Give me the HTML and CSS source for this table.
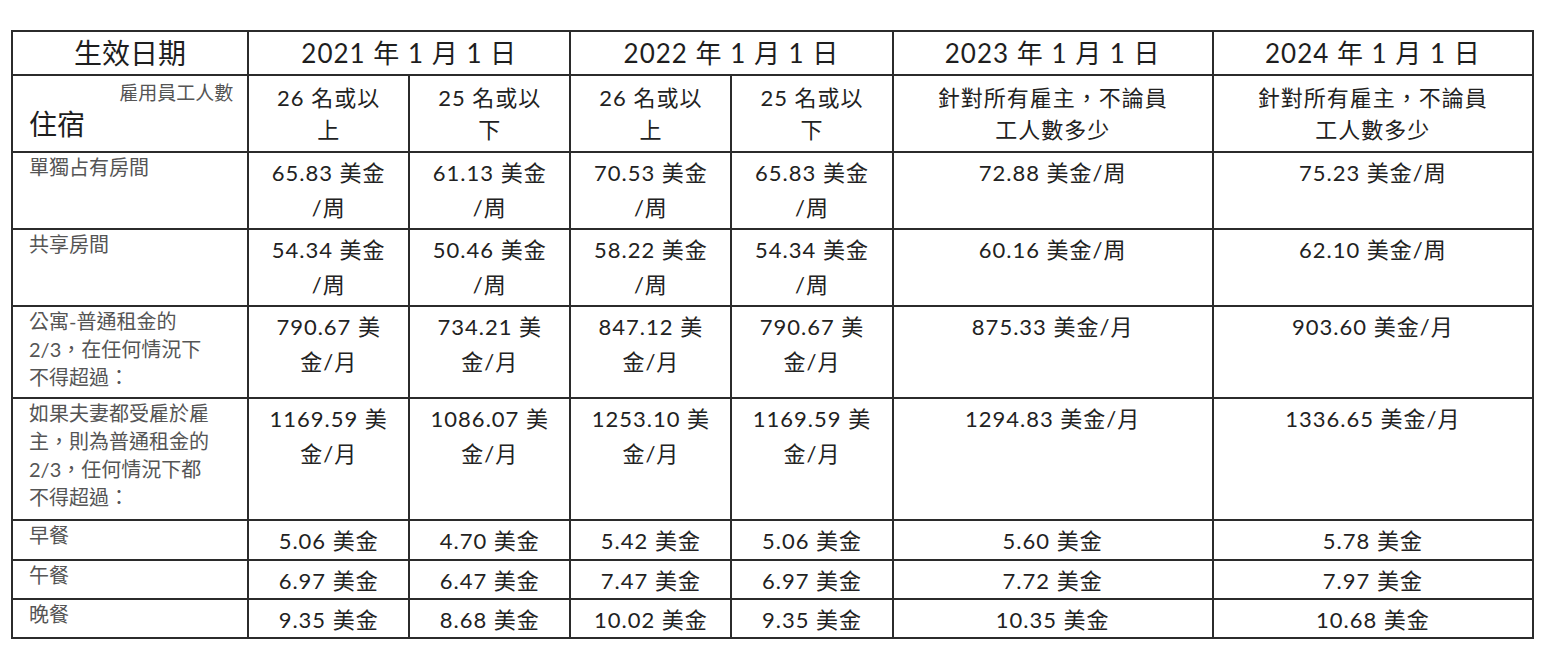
FILE: index.html
```html
<!DOCTYPE html>
<html lang="zh-Hant">
<head>
<meta charset="utf-8">
<title>住宿與餐費</title>
<link rel="stylesheet" href="styles.css">
</head>
<body>
<table class="rates">
  <colgroup>
    <col class="c-label">
    <col class="c-narrow"><col class="c-narrow"><col class="c-narrow"><col class="c-narrow">
    <col class="c-wide"><col class="c-wide">
  </colgroup>
  <tr class="r-head">
    <th class="h-main">生效日期</th>
    <th colspan="2">2021 年 1 月 1 日</th>
    <th colspan="2">2022 年 1 月 1 日</th>
    <th>2023 年 1 月 1 日</th>
    <th>2024 年 1 月 1 日</th>
  </tr>
  <tr class="r-sub">
    <td class="corner"><div class="corner-top">雇用員工人數</div><div class="corner-main">住宿</div></td>
    <td class="sub">26 名或以<br>上</td>
    <td class="sub">25 名或以<br>下</td>
    <td class="sub">26 名或以<br>上</td>
    <td class="sub">25 名或以<br>下</td>
    <td class="sub">針對所有雇主，不論員<br>工人數多少</td>
    <td class="sub">針對所有雇主，不論員<br>工人數多少</td>
  </tr>
  <tr class="r-77">
    <td class="label">單獨占有房間</td>
    <td class="val">65.83 美金<br>/周</td>
    <td class="val">61.13 美金<br>/周</td>
    <td class="val">70.53 美金<br>/周</td>
    <td class="val">65.83 美金<br>/周</td>
    <td class="val">72.88 美金/周</td>
    <td class="val">75.23 美金/周</td>
  </tr>
  <tr class="r-77">
    <td class="label">共享房間</td>
    <td class="val">54.34 美金<br>/周</td>
    <td class="val">50.46 美金<br>/周</td>
    <td class="val">58.22 美金<br>/周</td>
    <td class="val">54.34 美金<br>/周</td>
    <td class="val">60.16 美金/周</td>
    <td class="val">62.10 美金/周</td>
  </tr>
  <tr class="r-92">
    <td class="label">公寓-普通租金的<br>2/3，在任何情況下<br>不得超過：</td>
    <td class="val">790.67 美<br>金/月</td>
    <td class="val">734.21 美<br>金/月</td>
    <td class="val">847.12 美<br>金/月</td>
    <td class="val">790.67 美<br>金/月</td>
    <td class="val">875.33 美金/月</td>
    <td class="val">903.60 美金/月</td>
  </tr>
  <tr class="r-122">
    <td class="label">如果夫妻都受雇於雇<br>主，則為普通租金的<br>2/3，任何情況下都<br>不得超過：</td>
    <td class="val">1169.59 美<br>金/月</td>
    <td class="val">1086.07 美<br>金/月</td>
    <td class="val">1253.10 美<br>金/月</td>
    <td class="val">1169.59 美<br>金/月</td>
    <td class="val">1294.83 美金/月</td>
    <td class="val">1336.65 美金/月</td>
  </tr>
  <tr class="r-40">
    <td class="label">早餐</td>
    <td class="val">5.06 美金</td>
    <td class="val">4.70 美金</td>
    <td class="val">5.42 美金</td>
    <td class="val">5.06 美金</td>
    <td class="val">5.60 美金</td>
    <td class="val">5.78 美金</td>
  </tr>
  <tr class="r-39">
    <td class="label">午餐</td>
    <td class="val">6.97 美金</td>
    <td class="val">6.47 美金</td>
    <td class="val">7.47 美金</td>
    <td class="val">6.97 美金</td>
    <td class="val">7.72 美金</td>
    <td class="val">7.97 美金</td>
  </tr>
  <tr class="r-38">
    <td class="label">晚餐</td>
    <td class="val">9.35 美金</td>
    <td class="val">8.68 美金</td>
    <td class="val">10.02 美金</td>
    <td class="val">9.35 美金</td>
    <td class="val">10.35 美金</td>
    <td class="val">10.68 美金</td>
  </tr>
</table>
</body>
</html>
```

FILE: styles.css
```css
html, body {
  margin: 0;
  padding: 0;
  background: #ffffff;
}

body {
  font-family: Lato, "Noto Sans CJK TC", sans-serif;
  color: #222222;
}

.rates {
  margin: 30px 0 0 11px;
  border-collapse: collapse;
  table-layout: fixed;
  width: 1523px;
}

.c-label { width: 236px; }
.c-narrow { width: 161px; }
.c-wide { width: 320px; }

.rates th,
.rates td {
  border: 2px solid #2b2b2b;
  padding: 0;
  vertical-align: top;
  overflow: hidden;
}

.rates th {
  font-weight: normal;
  font-size: 26px;
  line-height: 42px;
  text-align: center;
  vertical-align: middle;
  color: #1e1e1e;
  letter-spacing: 1px;
}

.rates th.h-main {
  font-size: 28px;
  letter-spacing: 0;
}

.r-head { height: 44px; }
.r-sub { height: 77px; }
.r-77 { height: 77px; }
.r-92 { height: 92px; }
.r-122 { height: 122px; }
.r-40 { height: 40px; }
.r-39 { height: 39px; }
.r-38 { height: 38px; }

.rates td.sub {
  font-size: 22px;
  line-height: 32px;
  padding-top: 6px;
  text-align: center;
  letter-spacing: 1px;
  color: #222222;
}

.rates td.corner {
  padding: 0 14px 0 16px;
}

.corner-top {
  font-size: 19px;
  line-height: 24px;
  padding-top: 5px;
  text-align: right;
  color: #555555;
}

.corner-main {
  font-size: 28px;
  line-height: 38px;
  color: #1e1e1e;
}

.rates td.label {
  font-size: 20px;
  line-height: 28px;
  padding: 0 6px 0 16px;
  color: #555555;
}

.rates td.val {
  font-size: 22px;
  line-height: 35px;
  padding-top: 2px;
  text-align: center;
  letter-spacing: 1px;
  color: #222222;
}
```
